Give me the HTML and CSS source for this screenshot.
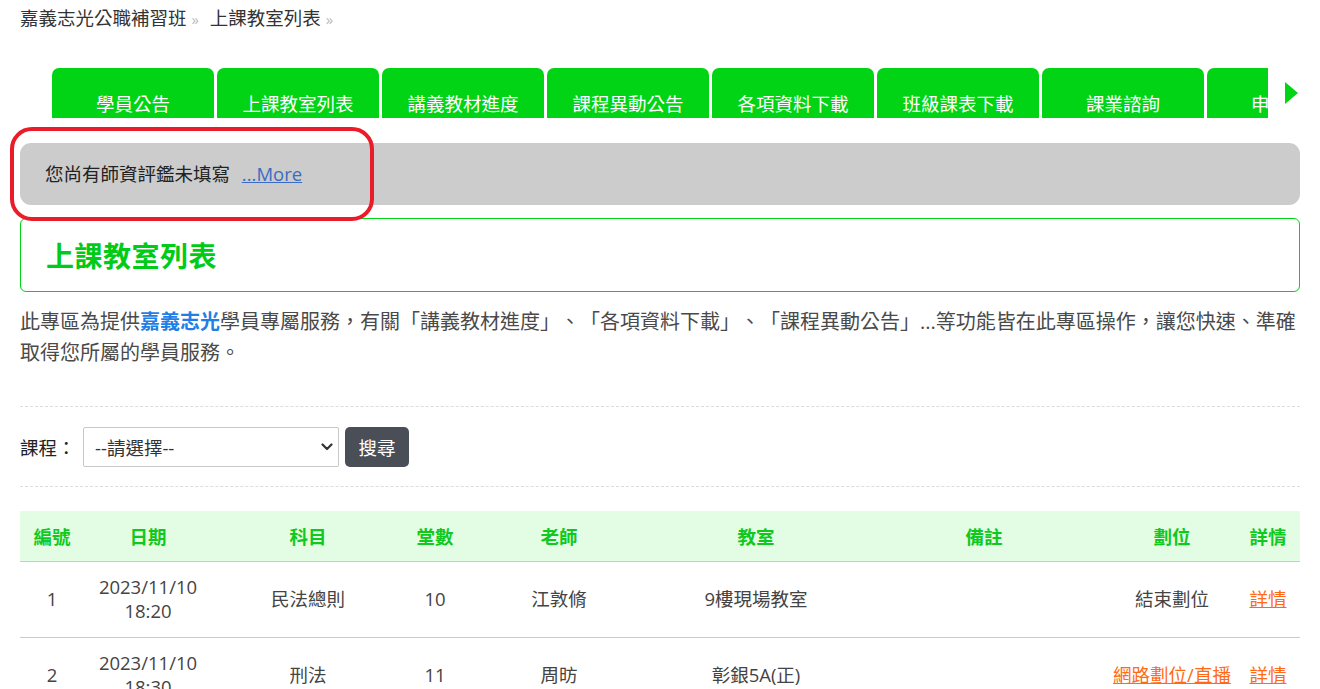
FILE: index.html
```html
<!DOCTYPE html>
<html lang="zh-Hant">
<head>
<meta charset="utf-8">
<title>上課教室列表</title>
<link rel="stylesheet" href="styles.css">
</head>
<body>
<div class="page">
  <div class="crumbs">
    <a class="crumb" href="#">嘉義志光公職補習班</a><span class="sep">»</span>
    <a class="crumb" href="#">上課教室列表</a><span class="sep">»</span>
  </div>

  <div class="tabbar">
    <div class="tabs-viewport">
      <ul class="tabs">
        <li class="tab">學員公告</li>
        <li class="tab">上課教室列表</li>
        <li class="tab">講義教材進度</li>
        <li class="tab">課程異動公告</li>
        <li class="tab">各項資料下載</li>
        <li class="tab">班級課表下載</li>
        <li class="tab">課業諮詢</li>
        <li class="tab">申請服務</li>
      </ul>
    </div>
    <button class="tab-next" aria-label="next">
      <svg width="13" height="22" viewBox="0 0 13 22"><polygon points="0,0 13,11 0,22" fill="#00d414"/></svg>
    </button>
  </div>

  <div class="notice-wrap">
    <div class="notice">您尚有師資評鑑未填寫 <a href="#" class="more">...More</a></div>
    <div class="annot"></div>
  </div>

  <div class="title-box"><h1>上課教室列表</h1></div>

  <p class="intro">此專區為提供<strong class="brand">嘉義志光</strong>學員專屬服務，有關「講義教材進度」、「各項資料下載」、「課程異動公告」...等功能皆在此專區操作，讓您快速、準確取得您所屬的學員服務。</p>

  <hr class="dash">
  <form class="search">
    <label class="lbl">課程：</label>
    <div class="select-wrap">
      <select class="sel"><option>--請選擇--</option></select>
      <svg class="chev" width="12" height="8" viewBox="0 0 12 8"><polyline points="1.5,1.5 6,6 10.5,1.5" fill="none" stroke="#333" stroke-width="2.2" stroke-linecap="round" stroke-linejoin="round"/></svg>
    </div>
    <button type="button" class="btn">搜尋</button>
  </form>
  <hr class="dash">

  <table class="list">
    <colgroup>
      <col class="c1"><col class="c2"><col class="c3"><col class="c4"><col class="c5"><col class="c6"><col class="c7"><col class="c8"><col class="c9">
    </colgroup>
    <thead>
      <tr><th>編號</th><th>日期</th><th>科目</th><th>堂數</th><th>老師</th><th>教室</th><th>備註</th><th>劃位</th><th>詳情</th></tr>
    </thead>
    <tbody>
      <tr><td>1</td><td>2023/11/10<br>18:20</td><td>民法總則</td><td>10</td><td>江敦脩</td><td>9樓現場教室</td><td></td><td>結束劃位</td><td><a href="#" class="lnk">詳情</a></td></tr>
      <tr><td>2</td><td>2023/11/10<br>18:30</td><td>刑法</td><td>11</td><td>周昉</td><td>彰銀5A(正)</td><td></td><td><a href="#" class="lnk">網路劃位/直播</a></td><td><a href="#" class="lnk">詳情</a></td></tr>
      <tr><td>3</td><td>2023/11/11<br>09:00</td><td>行政法</td><td>12</td><td>林政</td><td>9樓現場教室</td><td></td><td><a href="#" class="lnk">網路劃位/直播</a></td><td><a href="#" class="lnk">詳情</a></td></tr>
    </tbody>
  </table>
</div>
</body>
</html>
```

FILE: styles.css
```css
* { box-sizing: border-box; }
html, body { margin: 0; padding: 0; background: #fff; }
body {
  font-family: "Open Sans", "Noto Sans CJK TC", sans-serif;
  font-size: 18.5px;
  color: #444;
  text-spacing-trim: space-all;
}
.page {
  width: 1280px;
  margin: 0 auto;
}

/* breadcrumb */
.crumbs {
  padding-top: 5px;
  height: 30px;
  line-height: 26px;
  font-size: 18.5px;
}
.crumb { color: #333; text-decoration: none; }
.sep { color: #bbb; font-size: 15px; margin: 0 6px 0 5px; }

/* tabs */
.tabbar {
  margin-top: 38px;
  display: flex;
  align-items: flex-start;
  padding-left: 32px;
}
.tabs-viewport {
  width: 1216px;
  overflow: hidden;
}
.tabs {
  list-style: none;
  margin: 0;
  padding: 0;
  display: flex;
  gap: 3px;
  width: max-content;
}
.tab {
  width: 162px;
  height: 50px;
  background: #00d414;
  color: #fff;
  border-radius: 7px 7px 0 0;
  text-align: center;
  padding-top: 24px;
  line-height: 24px;
  font-size: 18.5px;
  flex: none;
}
.tab-next {
  margin: 14px 0 0 17px;
  padding: 0;
  border: 0;
  background: none;
  width: 13px;
  height: 22px;
  display: block;
}
.tab-next svg { display: block; }

/* notice */
.notice-wrap {
  position: relative;
  margin-top: 25px;
}
.notice {
  background: #cccccc;
  border-radius: 11px;
  height: 62px;
  padding: 0 25px;
  line-height: 62px;
  color: #222;
  font-size: 18.5px;
}
.more {
  color: #3a6cc4;
  margin-left: 7px;
  text-decoration: underline;
}
.annot {
  position: absolute;
  left: -10px;
  top: -16px;
  width: 364px;
  height: 94px;
  border: 4px solid #ea1c2a;
  border-radius: 22px;
  pointer-events: none;
}

/* title */
.title-box {
  margin-top: 13px;
  border: 1.5px solid #00d414;
  border-radius: 6px;
  height: 74px;
  display: flex;
  align-items: center;
  padding-left: 25px;
}
.title-box h1 {
  margin: 0;
  font-size: 28px;
  font-weight: 700;
  color: #00cc18;
  letter-spacing: 0.5px;
}

/* intro */
.intro {
  margin: 14px 0 0;
  font-size: 20px;
  line-height: 31px;
  color: #4a4a4a;
}
.brand { color: #1f7fe6; font-weight: 700; }

.dash {
  border: 0;
  border-top: 1px dashed #dcdcdc;
  margin: 38px 0 0;
  height: 0;
}
.search + .dash { margin-top: 19px; }

/* search */
.search {
  margin-top: 20px;
  display: flex;
  align-items: center;
  height: 40px;
}
.lbl { color: #222; font-size: 18.5px; width: 63px; }
.select-wrap { position: relative; width: 256px; height: 40px; }
.sel {
  -webkit-appearance: none;
  appearance: none;
  width: 100%;
  height: 100%;
  border: 1px solid #c8c8c8;
  border-radius: 2px;
  background: #fff;
  padding: 0 30px 0 11px;
  font-family: inherit;
  font-size: 18.5px;
  color: #333;
}
.chev { position: absolute; right: 6px; top: 16px; pointer-events: none; }
.btn {
  margin-left: 6px;
  width: 64px;
  height: 40px;
  border: 0;
  border-radius: 5px;
  background: #4a4f57;
  color: #fff;
  font-family: inherit;
  font-size: 18.5px;
  padding: 0;
}

/* table */
.list {
  margin-top: 24px;
  width: 100%;
  border-collapse: collapse;
  table-layout: fixed;
  font-size: 18.5px;
}
.c1 { width: 64px; } .c2 { width: 128px; } .c3 { width: 192px; }
.c4 { width: 62px; } .c5 { width: 186px; } .c6 { width: 208px; }
.c7 { width: 248px; } .c8 { width: 128px; } .c9 { width: 64px; }
.list th {
  background: #e3fde4;
  color: #10c81e;
  font-weight: 700;
  height: 50px;
  text-align: center;
  border-bottom: 1.5px solid #a6e4a6;
  padding: 0;
}
.list td {
  height: 76px;
  text-align: center;
  vertical-align: middle;
  border-bottom: 1.5px solid #a6e4a6;
  line-height: 24px;
  color: #444;
  padding: 0;
}
.lnk { color: #ff6a14; text-decoration: underline; }
```
